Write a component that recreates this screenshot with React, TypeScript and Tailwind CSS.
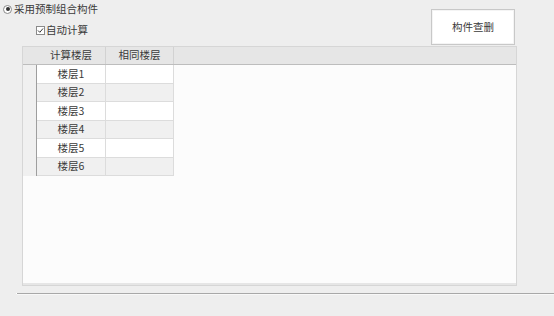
import React from "react"

const floors = ["楼层1", "楼层2", "楼层3", "楼层4", "楼层5", "楼层6"]

export default function App() {
  return (
    <div
      className="w-[554px] h-[316px] bg-[#eeeeee] text-[#3a3a3a] text-[10.5px] leading-none overflow-hidden"
      style={{ fontFamily: '"Noto Sans CJK SC", "Noto Sans", sans-serif' }}
    >
      {/* Top options */}
      <div className="flex justify-between h-[46px]">
        <div className="flex flex-col">
          <label className="flex items-center gap-[2px] pl-[3px] pt-[4px] h-[14px]">
            <span className="w-[9px] h-[9px] rounded-full border border-[#8a8a8a] bg-white flex items-center justify-center">
              <span className="w-[4px] h-[4px] rounded-full bg-[#333]" />
            </span>
            <span>采用预制组合构件</span>
          </label>
          <label className="flex items-center gap-[1px] pl-[36px] pt-[11px]">
            <span className="w-[9px] h-[9px] border border-[#8a8a8a] bg-white flex items-center justify-center">
              <svg width="7" height="7" viewBox="0 0 7 7">
                <path d="M1 3.5 L2.8 5.3 L6 1.5" fill="none" stroke="#333" strokeWidth="1" />
              </svg>
            </span>
            <span>自动计算</span>
          </label>
        </div>
        <button className="mt-[9px] mr-[39px] w-[84px] h-[36px] bg-white border border-[#c8c8c8] shadow-[inset_0_0_0_1px_#f4f4f4] text-[#3a3a3a] text-[10.5px] leading-none">
          构件查删
        </button>
      </div>

      {/* Grid panel */}
      <div className="ml-[22px] w-[495px] h-[240px] border border-[#d6d6d6] bg-[#fcfcfc] flex flex-col">
        <div className="flex h-[18px] bg-[#e6e6e6] border-b border-[#bdbdbd] shrink-0">
          <div className="w-[83px] border-r border-[#d2d2d2] flex items-center justify-center pl-[14px]">计算楼层</div>
          <div className="w-[68px] border-r border-[#d2d2d2] flex items-center justify-center">相同楼层</div>
          <div className="flex-1" />
        </div>
        <div className="flex flex-col">
          {floors.map((f, i) => {
            const bg = i % 2 ? "bg-[#f0f0f0]" : "bg-white"
            return (
              <div key={f} className="flex h-[18.5px]">
                <div className="w-[14px] bg-[#f0f0f0] border-r border-[#9e9e9e]" />
                <div className={`w-[69px] border-r border-b border-[#dcdcdc] flex items-center justify-center ${bg}`}>{f}</div>
                <div className={`w-[68px] border-r border-b border-[#dcdcdc] ${bg}`} />
              </div>
            )
          })}
        </div>
        <div className="flex-1" />
        <div className="h-[2px] bg-[#e6e6e6]" />
      </div>

      {/* Separator */}
      <div className="mt-[7px] ml-[16px] flex h-[2px]">
        <div className="w-[1px] h-[1px] bg-white" />
        <div className="flex-1 border-t border-[#a8a8a8] border-b border-b-[#f8f8f8]" />
      </div>
    </div>
  )
}
